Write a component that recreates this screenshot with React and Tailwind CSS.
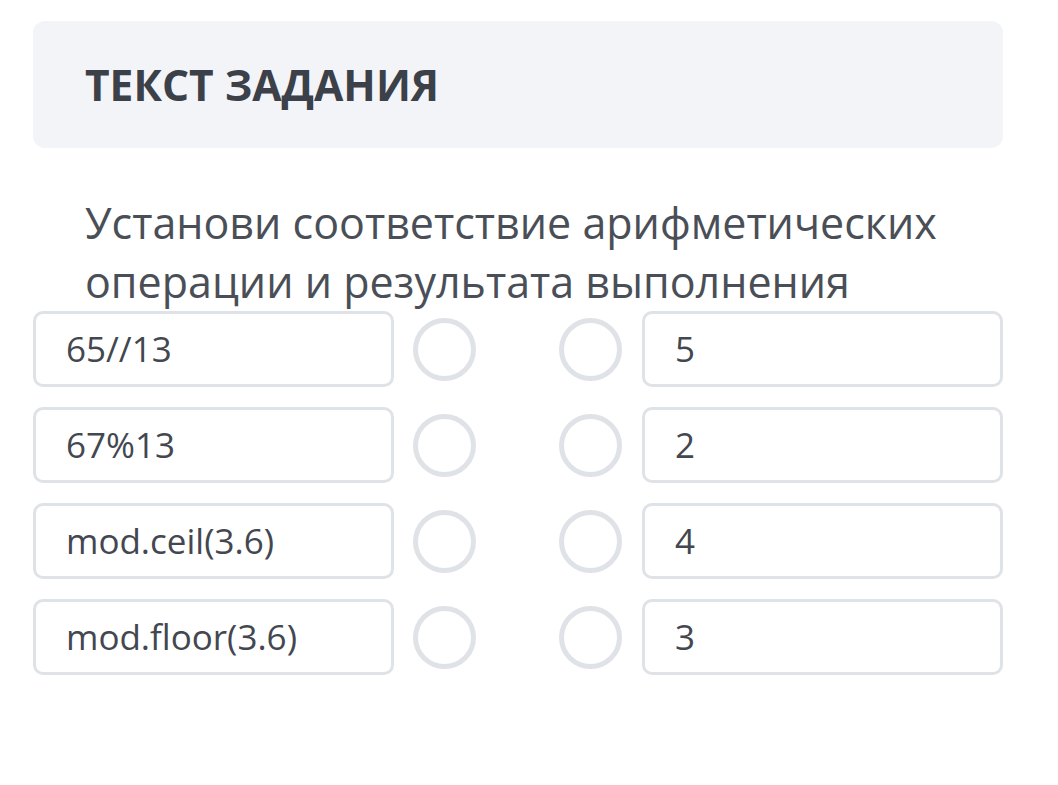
export default function App() {
  const left = ["65//13", "67%13", "mod.ceil(3.6)", "mod.floor(3.6)"];
  const right = ["5", "2", "4", "3"];
  return (
    <div className="w-[1058px] h-[785px] bg-white" style={{ fontFamily: '"Open Sans", sans-serif' }}>
      <div className="pl-[33px] pr-[55px] pt-[21px]">
        <div className="h-[127px] rounded-[12px] bg-[#f2f4f7] flex items-center pl-[52px]">
          <h1 className="text-[42.5px] font-bold text-[#3b4049]">ТЕКСТ ЗАДАНИЯ</h1>
        </div>
        <p className="mt-[45px] pl-[52px] text-[43px] leading-[59px] text-[#4a4f57]">
          Установи соответствие арифметических операции и результата выполнения
        </p>
        <div className="flex flex-col gap-[20px]">
          {left.map((l, i) => (
            <div key={i} className="flex items-center">
              <div className="w-[361px] h-[76px] rounded-[10px] border-[3px] border-[#dfe2e6] flex items-center pl-[30px] text-[35px] text-[#43474f]">
                {l}
              </div>
              <div className="ml-[19px] w-[63px] h-[63px] rounded-full border-[5px] border-[#dfe2e6]" />
              <div className="ml-[83px] w-[63px] h-[63px] rounded-full border-[5px] border-[#dfe2e6]" />
              <div className="ml-[20px] w-[361px] h-[76px] rounded-[10px] border-[3px] border-[#dfe2e6] flex items-center pl-[30px] text-[35px] text-[#43474f]">
                {right[i]}
              </div>
            </div>
          ))}
        </div>
      </div>
    </div>
  );
}
